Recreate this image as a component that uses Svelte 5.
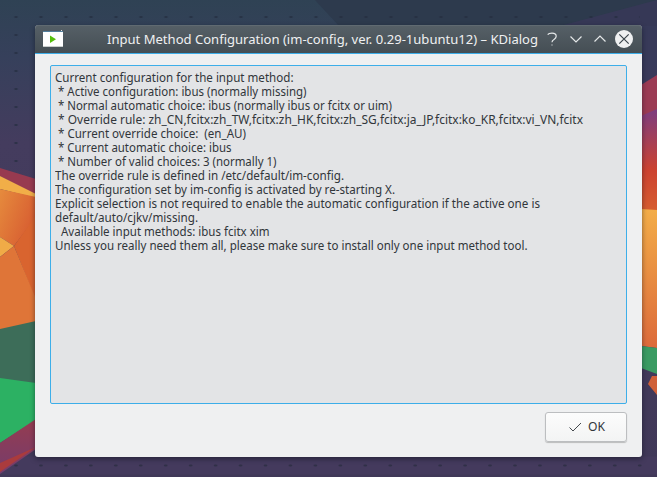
<script>
  const lines = [
    ['Current configuration for the input method:', 238.5],
    [' * Active configuration: ibus (normally missing)', 251.5],
    [' * Normal automatic choice: ibus (normally ibus or fcitx or uim)', 337],
    [' * Override rule: zh_CN,fcitx:zh_TW,fcitx:zh_HK,fcitx:zh_SG,fcitx:ja_JP,fcitx:ko_KR,fcitx:vi_VN,fcitx', 528],
    [' * Current override choice:  (en_AU)', 191],
    [' * Current automatic choice: ibus', 176.5],
    [' * Number of valid choices: 3 (normally 1)', 221.5],
    ['The override rule is defined in /etc/default/im-config.', 289],
    ['The configuration set by im-config is activated by re-starting X.', 340],
    ['Explicit selection is not required to enable the automatic configuration if the active one is', 485],
    ['default/auto/cjkv/missing.', 143],
    ['  Available input methods: ibus fcitx xim', 214.5],
    ['Unless you really need them all, please make sure to install only one input method tool.', 472.5]
  ];

  function fit(node, width) {
    node.style.transform = `scaleX(${width / node.getBoundingClientRect().width})`;
  }
</script>

<main class="desktop">
  <svg class="wallpaper" width="657" height="477" viewBox="0 0 657 477" aria-hidden="true">
    <defs>
      <linearGradient id="sky" x2="0" y2="1">
        <stop offset="0" stop-color="#2f4254" /><stop offset=".12" stop-color="#36405b" />
        <stop offset=".3" stop-color="#443c5e" /><stop offset="1" stop-color="#403858" />
      </linearGradient>
      <linearGradient id="amber" x2="0" y2="1"><stop stop-color="#f3ad48" /><stop offset="1" stop-color="#dc6a3a" /></linearGradient>
      <linearGradient id="ember" x2="0" y2="1"><stop stop-color="#7c3d80" /><stop offset=".6" stop-color="#cc4230" /><stop offset="1" stop-color="#d65d30" /></linearGradient>
      <linearGradient id="orange" x2="1" y2=".6"><stop stop-color="#e68b3d" /><stop offset="1" stop-color="#d75c31" /></linearGradient>
      <linearGradient id="plum" x2="0" y2="1"><stop stop-color="#963c50" /><stop offset="1" stop-color="#753c6c" /></linearGradient>
      <pattern id="dots" x="3.5" y="8" width="25" height="18" patternUnits="userSpaceOnUse">
        <ellipse cx="12.5" cy="9" rx="1.9" ry="1" fill="#222c3d" opacity=".75" />
      </pattern>
    </defs>
    <rect width="657" height="477" fill="url(#sky)" />
    <path d="M315 0H657V26H339Z" fill="#2d3a4d" />
    <path d="M560 26L657 0V210H560Z" fill="#39385a" opacity=".75" />
    <rect width="640" height="166" fill="url(#dots)" />
    <rect y="456.500" width="657" height="18" fill="#443a5d" />
    {#each Array(26) as _, i}
      <ellipse cx={16 + i * 24.95} cy="465.500" rx="1.9" ry="1" fill="#292e40" opacity=".75" />
    {/each}
    <path d="M0 168L36 179V195L0 176Z" fill="#973a50" />
    <path d="M0 176L36 194V198L0 189Z" fill="#f1ae48" />
    <path d="M0 189L36 197V217L14 246L0 237Z" fill="url(#orange)" />
    <path d="M36 215L14 246L36 301Z" fill="#d9642f" />
    <path d="M0 237L14 246L0 257Z" fill="#f0ab47" />
    <path d="M0 257L14 246L36 299V322L0 330Z" fill="#df7538" />
    <path d="M0 329L36 321V384L0 379Z" fill="#3d6d59" />
    <path d="M0 378L36 383V420L0 443Z" fill="#2cb163" />
    <path d="M0 443L36 419V449L0 474Z" fill="url(#plum)" />
    <path d="M0 463L36 447L0 472Z" fill="#aa3b3d" />
    <path d="M641 85L657 75V110L641 117Z" fill="#9b3b54" />
    <path d="M641 116L657 109V211H641Z" fill="url(#ember)" />
    <path d="M641 209L657 210V348L641 346Z" fill="url(#amber)" />
    <path d="M641 346L657 348V374L641 368Z" fill="#3a9b62" />
    <path d="M648 384L652 376H657V395Z" fill="#cf6038" />
  </svg>

  <section class="dialog">
    <header>
      <svg class="app" width="20" height="18" viewBox="0 0 20 18">
        <path d="M0 2H20V17H0Z" fill="#fff" /><path d="M0 1H20V2H0Z" fill="#527f9d" />
        <path d="M0 16H20V17H0Z" fill="#c9cdcd" /><path d="M18 0H19V1H18Z" fill="#dfe3e5" />
        <path d="M7 5.500L13 9.300L7 13Z" fill="#55bf0b" />
      </svg>
      <h1><span use:fit={431}>Input Method Configuration (im-config, ver. 0.29-1ubuntu12) – KDialog</span></h1>
      <svg class="controls" width="92" height="20" viewBox="0 0 92 20" fill="none" stroke="#e5e8e9" stroke-width="1.2">
        <path d="M3.700 5.700Q4.700 4.200 8 4.200Q12.200 4.200 12.200 7.300Q12.200 9 10 10.500Q8 11.800 8 13.200" />
        <path d="M8 15.300V16.800" opacity=".6" />
        <path d="M26.500 7.500L32 13L37.500 7.500M50.500 12.500L56 7L61.500 12.500" />
        <circle cx="80" cy="10" r="9" fill="#eff0f1" stroke="none" />
        <path d="M75.300 5.300L84.700 14.700M84.700 5.300L75.300 14.700" stroke="#3b444b" />
      </svg>
    </header>
    <div class="body">
      <div class="report">
        {#each lines as [text, width]}
          <p><span use:fit={width}>{text}</span></p>
        {/each}
      </div>
      <footer>
        <button>
          <svg width="14" height="12" viewBox="0 0 14 12" fill="none" stroke="#454a4e" stroke-width="1"><path d="M1.500 6.500L5 10L13 2" /></svg>
          <span use:fit={17}>OK</span>
        </button>
      </footer>
    </div>
  </section>
</main>

<style>
  .desktop {
    position: relative;
    box-sizing: border-box;
    width: 657px;
    height: 477px;
    padding: 25px 15px 20px 35px;
    overflow: hidden;
    font-family: "Noto Sans", "Open Sans", sans-serif;
  }
  .wallpaper { position: absolute; inset: 0; }
  .dialog {
    position: relative;
    display: flex;
    flex-direction: column;
    height: 432px;
    border-radius: 4px 4px 3px 3px;
    background: #eff0f1;
    box-shadow: 0 2px 5px rgba(12, 15, 26, .5);
  }
  header {
    display: flex;
    align-items: center;
    box-sizing: border-box;
    flex: none;
    height: 29px;
    padding-left: 8px;
    border-bottom: 1px solid #3daee9;
    border-radius: 4px 4px 0 0;
    background: linear-gradient(#566067, #454e54);
    box-shadow: inset 0 1px #606a71;
  }
  .app { flex: none; }
  h1 {
    flex: none;
    width: 431px;
    margin: 0 0 0 44px;
    color: #eff0f1;
    font-size: 13.300px;
    font-weight: 400;
    line-height: 26px;
    white-space: pre;
  }
  .controls { flex: none; margin-left: 6px; }
  span {
    display: block;
    width: max-content;
    transform-origin: 0 50%;
    white-space: pre;
  }
  .body {
    display: flex;
    flex: 1;
    flex-direction: column;
    padding: 11px 15px 14px;
  }
  .report {
    box-sizing: border-box;
    height: 339px;
    padding: 5px 4px;
    border: 1px solid #3daee9;
    border-radius: 2px;
    background: #e3e4e6;
    color: #31363b;
    font-size: 12px;
  }
  p { height: 14px; margin: 0; line-height: 14px; white-space: pre; }
  footer { display: flex; justify-content: flex-end; padding-top: 8px; }
  button {
    display: flex;
    align-items: center;
    box-sizing: border-box;
    width: 82px;
    height: 30px;
    padding: 0 0 0 22px;
    border: 1px solid #bcbec0;
    border-radius: 3px;
    background: linear-gradient(#fcfcfc, #f3f4f4);
    box-shadow: 0 1px 1px rgba(0, 0, 0, .22);
    color: #31363b;
    font: 12px/14px "Noto Sans", sans-serif;
    gap: 6px;
  }
</style>
